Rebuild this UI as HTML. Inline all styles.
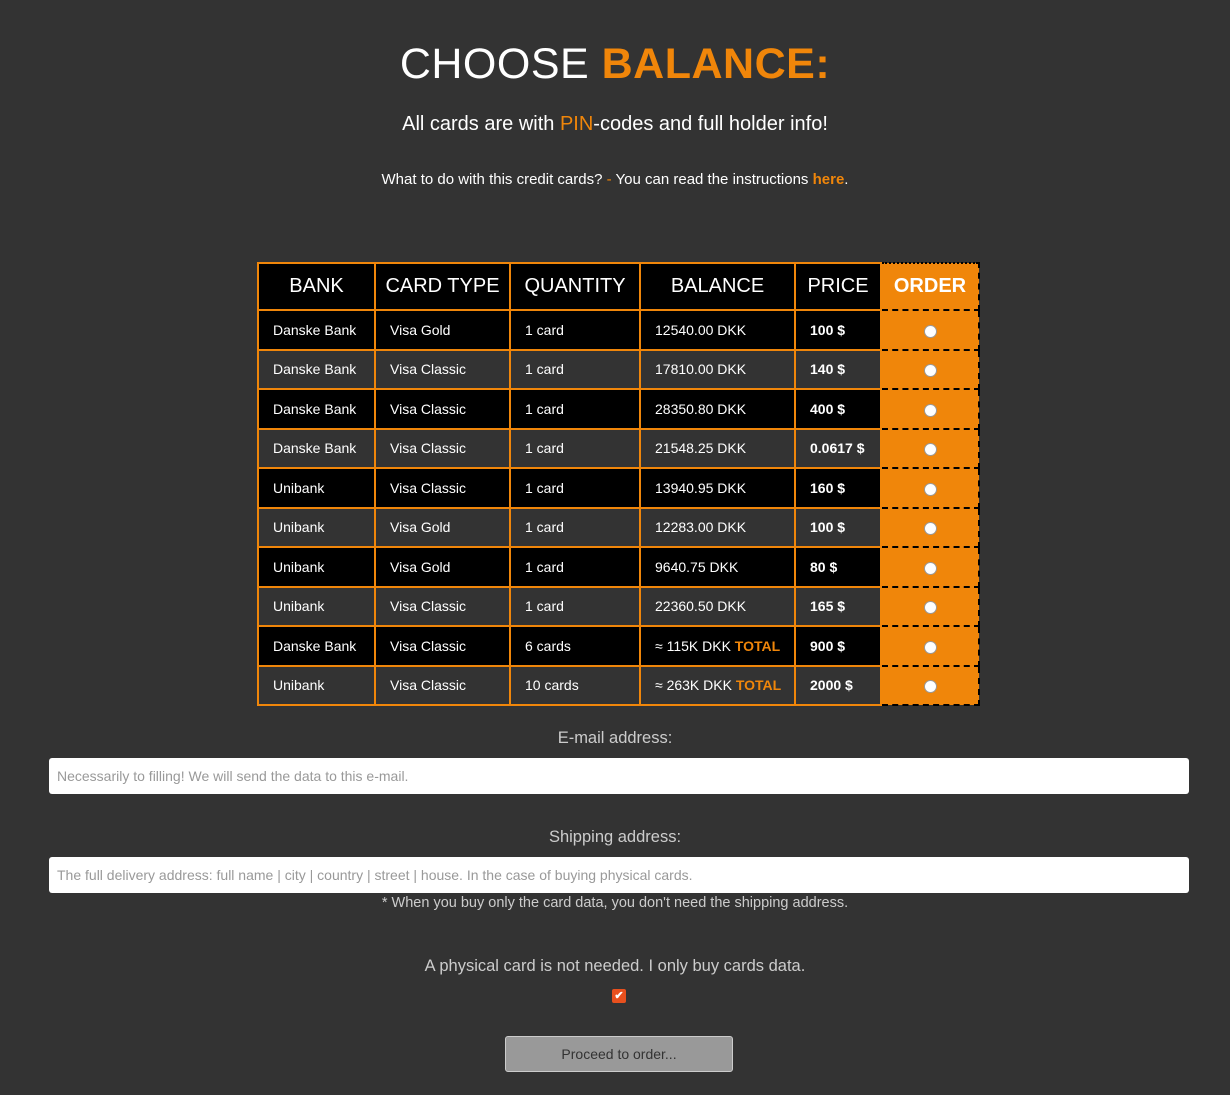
<!DOCTYPE html>
<html><head><meta charset="utf-8"><style>
*{box-sizing:border-box;margin:0;padding:0}
body{width:1230px;height:1095px;background:#333;font-family:"Liberation Sans",sans-serif;color:#fff;position:relative;overflow:hidden}
.c{position:absolute;left:0;width:1230px;text-align:center}
h1{font-weight:normal;font-size:43px;letter-spacing:0.5px}
.or{color:#f0860a}
table{position:absolute;left:257px;top:262px;border-collapse:collapse;table-layout:fixed;width:721px}
td,th{border:2px solid #f0860a;font-size:14px;padding-left:14px;text-align:left;white-space:nowrap}
th{font-size:20px;font-weight:normal;text-align:center;padding:0;height:47px;background:#000}
tr.a td{background:#000}
tr.b td{background:#333}
td{height:39.5px}
td.p{font-weight:bold}
td.o,th.o{background:#f0860a !important;border:2px dashed #000;text-align:center;padding:0}
th.o{font-weight:bold;border-top-style:dotted}
.r{display:inline-block;width:13px;height:13px;border-radius:50%;background:#fff;border:1.5px solid #999;vertical-align:middle}
.lbl{font-size:16.5px;color:#ccc}
.inp{position:absolute;left:49px;width:1140px;height:36px;background:#fff;border-radius:3px;color:#999;font-size:14px;padding:10px 8px}
</style></head><body>
<div class="c" style="top:40px"><h1>CHOOSE <b class="or">BALANCE:</b></h1></div>
<div class="c" style="top:113px;font-size:20px">All cards are with <span class="or">PIN</span>-codes and full holder info!</div>
<div class="c" style="top:171px;font-size:15px">What to do with this credit cards? <span class="or">-</span> You can read the instructions <b class="or">here</b>.</div>
<table>
<colgroup><col style="width:117px"><col style="width:135px"><col style="width:130px"><col style="width:155px"><col style="width:86px"><col style="width:98px"></colgroup>
<tr><th>BANK</th><th>CARD TYPE</th><th>QUANTITY</th><th>BALANCE</th><th>PRICE</th><th class="o">ORDER</th></tr>
<tr class="a"><td>Danske Bank</td><td>Visa Gold</td><td>1 card</td><td>12540.00 DKK</td><td class="p">100 $</td><td class="o"><span class="r"></span></td></tr>
<tr class="b"><td>Danske Bank</td><td>Visa Classic</td><td>1 card</td><td>17810.00 DKK</td><td class="p">140 $</td><td class="o"><span class="r"></span></td></tr>
<tr class="a"><td>Danske Bank</td><td>Visa Classic</td><td>1 card</td><td>28350.80 DKK</td><td class="p">400 $</td><td class="o"><span class="r"></span></td></tr>
<tr class="b"><td>Danske Bank</td><td>Visa Classic</td><td>1 card</td><td>21548.25 DKK</td><td class="p">0.0617 $</td><td class="o"><span class="r"></span></td></tr>
<tr class="a"><td>Unibank</td><td>Visa Classic</td><td>1 card</td><td>13940.95 DKK</td><td class="p">160 $</td><td class="o"><span class="r"></span></td></tr>
<tr class="b"><td>Unibank</td><td>Visa Gold</td><td>1 card</td><td>12283.00 DKK</td><td class="p">100 $</td><td class="o"><span class="r"></span></td></tr>
<tr class="a"><td>Unibank</td><td>Visa Gold</td><td>1 card</td><td>9640.75 DKK</td><td class="p">80 $</td><td class="o"><span class="r"></span></td></tr>
<tr class="b"><td>Unibank</td><td>Visa Classic</td><td>1 card</td><td>22360.50 DKK</td><td class="p">165 $</td><td class="o"><span class="r"></span></td></tr>
<tr class="a"><td>Danske Bank</td><td>Visa Classic</td><td>6 cards</td><td>≈ 115K DKK <b class="or">TOTAL</b></td><td class="p">900 $</td><td class="o"><span class="r"></span></td></tr>
<tr class="b"><td>Unibank</td><td>Visa Classic</td><td>10 cards</td><td>≈ 263K DKK <b class="or">TOTAL</b></td><td class="p">2000 $</td><td class="o"><span class="r"></span></td></tr>
</table>
<div class="c lbl" style="top:729px">E-mail address:</div>
<div class="inp" style="top:758px">Necessarily to filling! We will send the data to this e-mail.</div>
<div class="c lbl" style="top:828px">Shipping address:</div>
<div class="inp" style="top:857px">The full delivery address: full name | city | country | street | house. In the case of buying physical cards.</div>
<div class="c" style="top:895px;font-size:14.5px;color:#ccc">* When you buy only the card data, you don't need the shipping address.</div>
<div class="c lbl" style="top:957px">A physical card is not needed. I only buy cards data.</div>
<div style="position:absolute;left:612px;top:989px;width:14px;height:14px;background:#e8501e;border-radius:2px;color:#fff;font-size:11px;font-weight:bold;text-align:center;line-height:14px">✔</div>
<div style="position:absolute;left:505px;top:1036px;width:228px;height:36px;background:#999;border:1px solid #ccc;border-radius:3px;color:#333;font-size:14px;text-align:center;line-height:34px">Proceed to order...</div>
</body></html>
